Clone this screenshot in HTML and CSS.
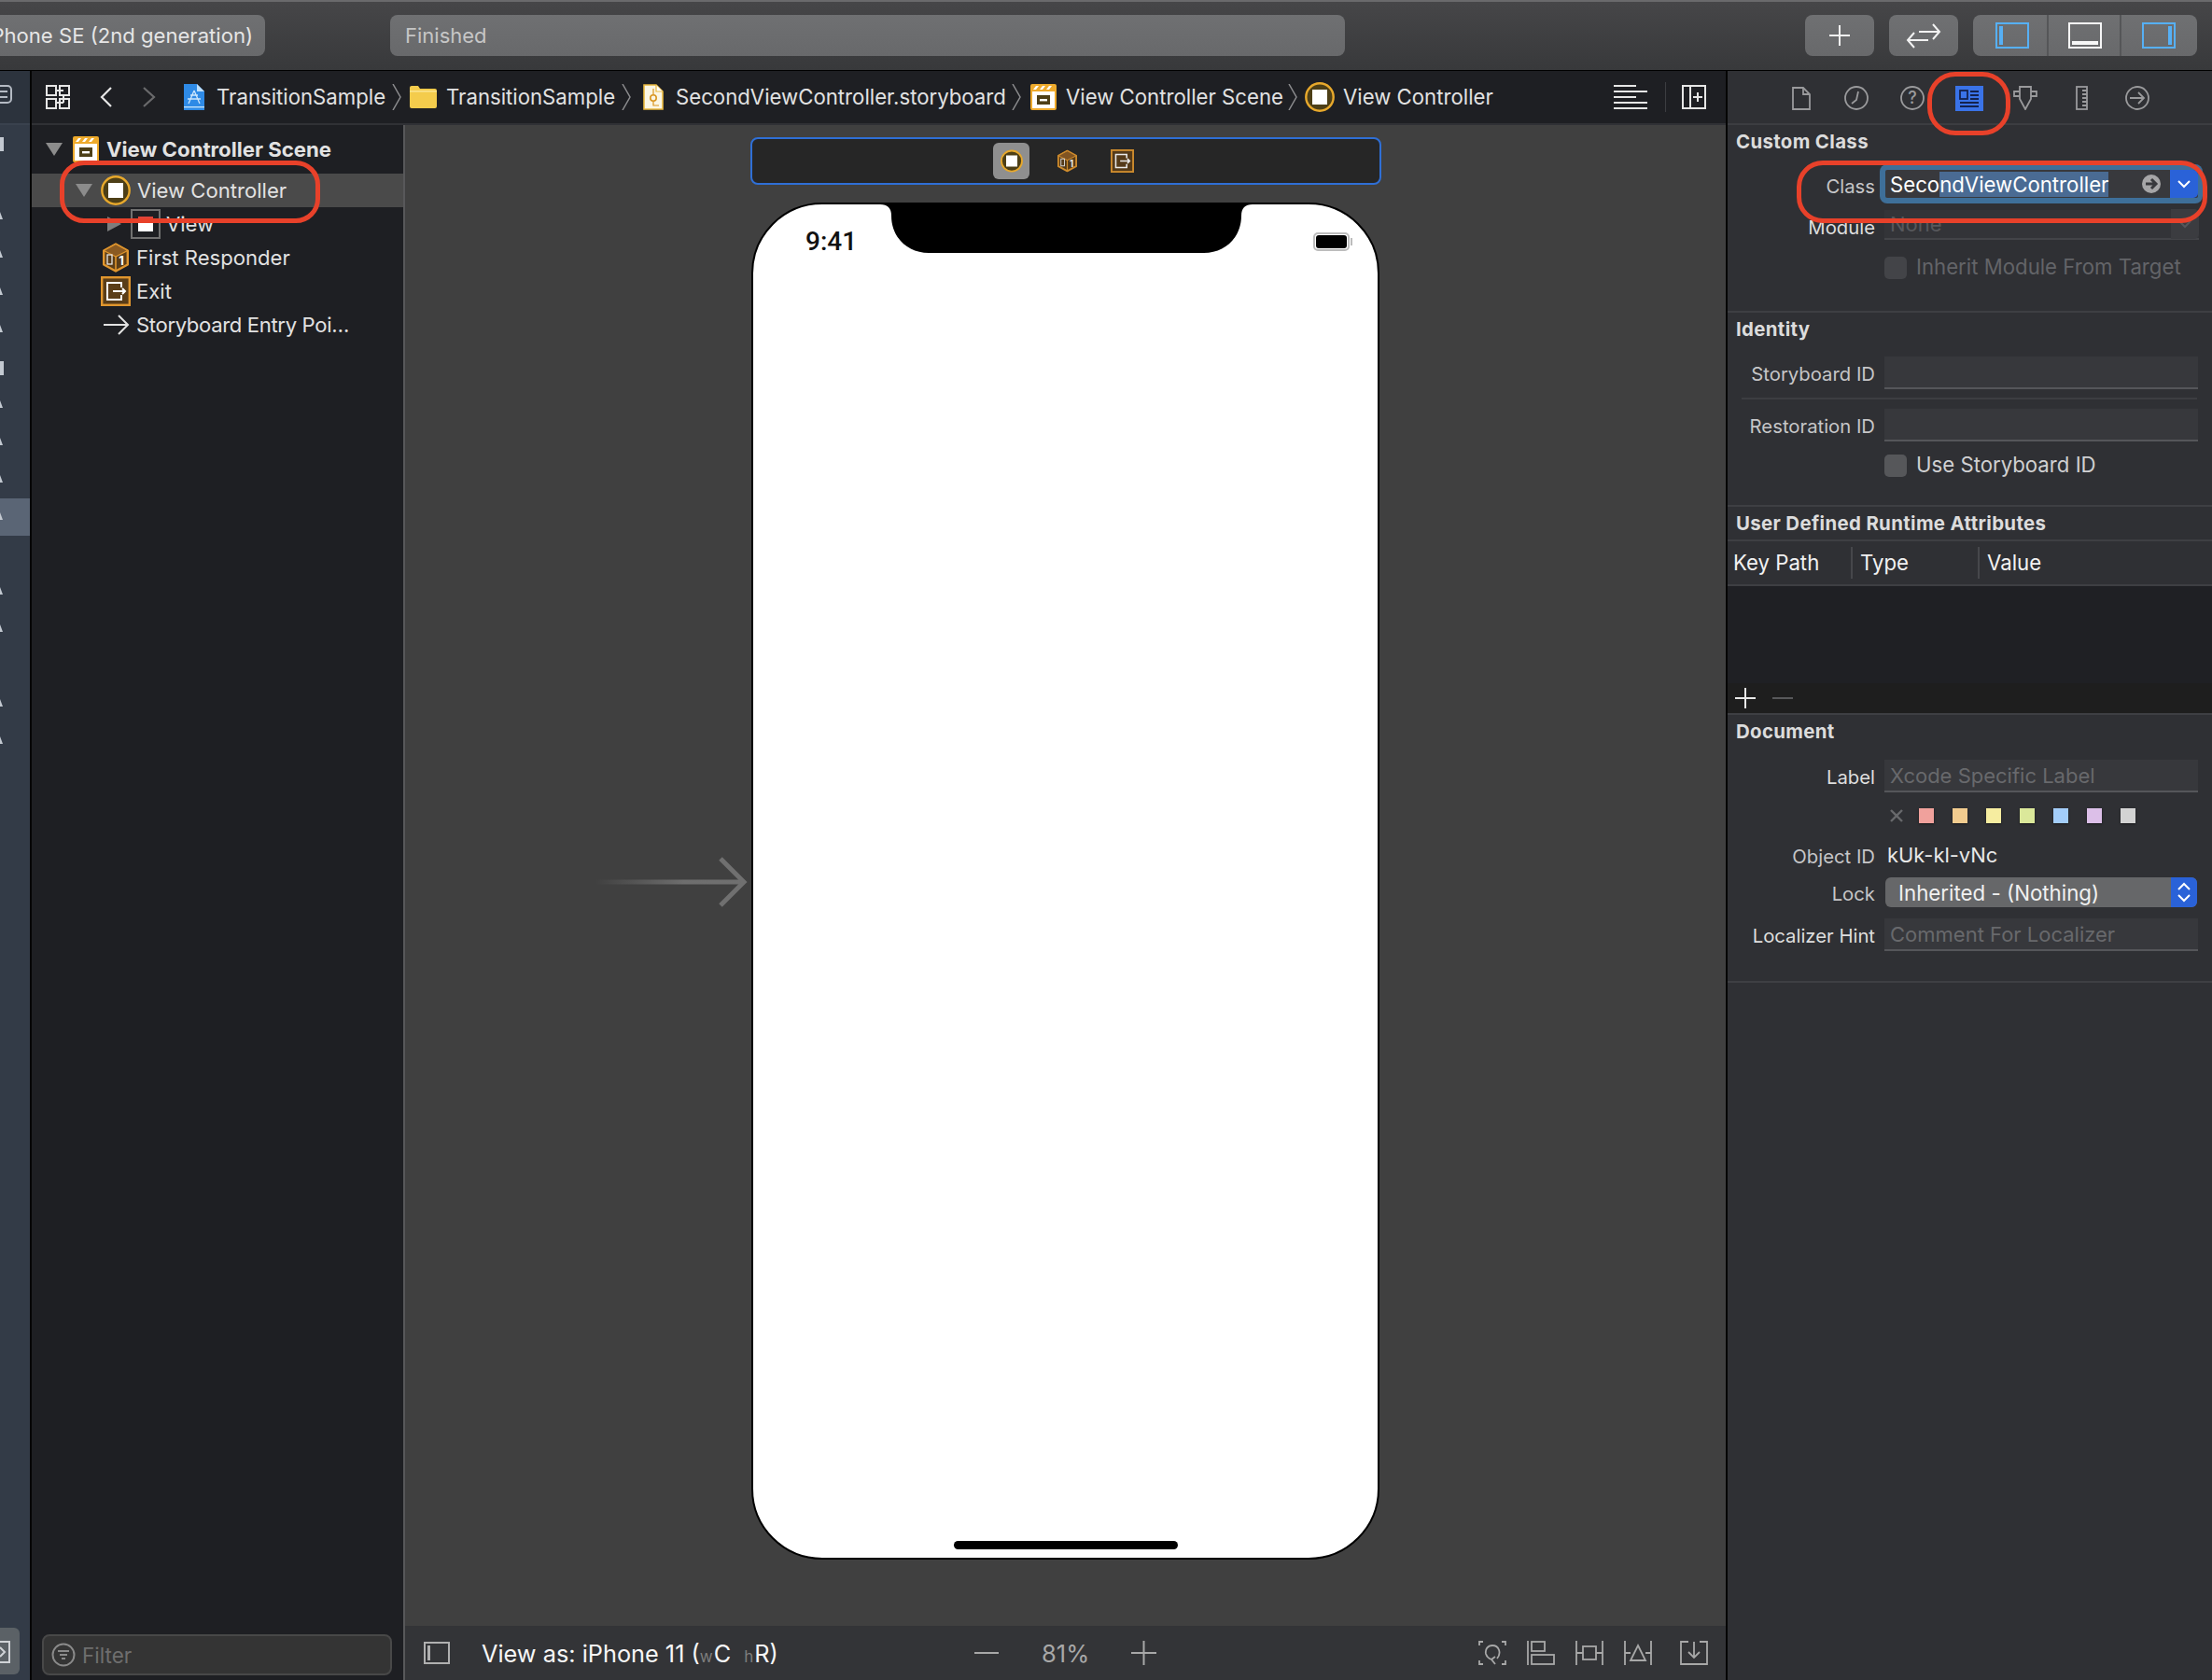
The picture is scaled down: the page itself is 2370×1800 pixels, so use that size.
FILE: index.html
```html
<!DOCTYPE html>
<html lang="en">
<head>
<meta charset="utf-8">
<title>Xcode</title>
<link rel="stylesheet" href="styles.css">
</head>
<body>
<svg class="sprite" aria-hidden="true">
  <symbol id="i-scene" viewBox="0 0 28 28">
    <rect x="0" y="0" width="28" height="28" rx="2" fill="#eeaa2c"/>
    <path d="M3 6l3-4h3l-3 4zM10 6l3-4h3l-3 4zM17 6l3-4h3l-3 4z" fill="#fff"/>
    <rect x="2" y="8" width="24" height="18" fill="#fff"/>
    <rect x="7" y="12" width="14" height="10" fill="#4d3f17"/>
    <rect x="10" y="16" width="8" height="2.4" fill="#fff"/>
  </symbol>
  <symbol id="i-vc" viewBox="0 0 32 32">
    <circle cx="16" cy="16" r="14.7" fill="#4d3f17" stroke="#e8a92c" stroke-width="2.4"/>
    <rect x="8" y="8" width="16" height="16" fill="#fff"/>
  </symbol>
  <symbol id="i-cube" viewBox="0 0 28 32">
    <path d="M14 1.5L26.8 8.5V23.5L14 30.5L1.2 23.5V8.5Z" fill="#5a3d18" stroke="#e0962e" stroke-width="2.4" stroke-linejoin="round"/>
    <path d="M14 1.5L26.8 8.5L14 15L1.2 8.5Z" fill="#8a5a22" stroke="#e0962e" stroke-width="1.4" stroke-linejoin="round"/>
    <path d="M14 15V30.5" stroke="#e0962e" stroke-width="1.6"/>
    <rect x="5" y="13" width="5" height="10" fill="none" stroke="#e8e8e8" stroke-width="1.3"/>
    <text x="20" y="24" class="cube-num" text-anchor="middle">1</text>
  </symbol>
  <symbol id="i-exit" viewBox="0 0 32 32">
    <rect x="1.2" y="1.2" width="29.6" height="29.6" fill="#5a3d18" stroke="#e0962e" stroke-width="2.4"/>
    <path d="M22 12V7H7V25H22V20" fill="none" stroke="#fff" stroke-width="2"/>
    <path d="M13 16H26M23 13l3 3-3 3" fill="none" stroke="#fff" stroke-width="2"/>
  </symbol>
  <symbol id="i-chev" viewBox="0 0 10 28">
    <path d="M1 0L9 14L1 28" fill="none" stroke="#8c8c8e" stroke-width="1.5"/>
  </symbol>
</svg>

<header class="toolbar">
  <div class="tb-btn scheme">iPhone SE (2nd generation)</div>
  <div class="tb-btn status">Finished</div>
  <div class="tb-btn tb-icon">
    <svg width="24" height="24" viewBox="0 0 24 24"><path d="M12 1V23M1 12H23" stroke="#f2f2f2" stroke-width="2"/></svg>
  </div>
  <div class="tb-btn tb-icon swap">
    <svg width="38" height="28" viewBox="0 0 38 28"><path d="M14 10H36M29 2l7 8-7 8M2 19H24M9 11l-7 8 7 8" fill="none" stroke="#f2f2f2" stroke-width="2"/></svg>
  </div>
  <div class="tb-group">
    <div class="tb-seg seg-a">
      <svg width="36" height="28" viewBox="0 0 36 28"><rect x="1" y="1" width="34" height="26" fill="none" stroke="#56b0f5" stroke-width="2"/><rect x="4" y="4" width="4" height="20" fill="#56b0f5"/></svg>
    </div>
    <div class="tb-seg seg-b">
      <svg width="36" height="28" viewBox="0 0 36 28"><rect x="1" y="1" width="34" height="26" fill="none" stroke="#f6f6f6" stroke-width="2"/><rect x="4" y="20" width="28" height="4" fill="#f6f6f6"/></svg>
    </div>
    <div class="tb-seg seg-c">
      <svg width="36" height="28" viewBox="0 0 36 28"><rect x="1" y="1" width="34" height="26" fill="none" stroke="#56b0f5" stroke-width="2"/><rect x="28" y="4" width="4" height="20" fill="#56b0f5"/></svg>
    </div>
  </div>
</header>

<div class="workspace">
  <aside class="navstrip">
    <div class="nav-top">
      <svg width="14" height="20" viewBox="0 0 14 20"><path d="M-8 1H8a4 4 0 0 1 4 4V15a4 4 0 0 1-4 4H-8" fill="none" stroke="#b4bac3" stroke-width="2"/><path d="M0 7H8M0 13H8" stroke="#b4bac3" stroke-width="2"/></svg>
    </div>
    <div class="nav-files">
      <div class="nav-selected"></div>
      <svg class="nav-marks" width="32" height="700" viewBox="0 0 32 700">
        <g fill="#c3c9d1">
          <rect x="0" y="13" width="4" height="15"/>
          <path d="M0 93l3 8H0zM0 134l3 8H0zM0 174l3 8H0zM0 214l3 8H0z"/>
          <rect x="0" y="253" width="4" height="15"/>
          <path d="M0 295l3 8H0zM0 335l3 8H0zM0 375l3 8H0zM0 415l3 8H0zM0 495l3 8H0zM0 535l3 8H0zM0 615l3 8H0zM0 655l3 8H0z"/>
        </g>
      </svg>
    </div>
    <div class="nav-bottom">
      <svg width="20" height="28" viewBox="0 0 20 28"><rect x="-10" y="4" width="20" height="22" fill="none" stroke="#cfd2d6" stroke-width="2"/><path d="M0 10l5 5-5 5" fill="none" stroke="#cfd2d6" stroke-width="2"/></svg>
    </div>
  </aside>

  <main class="editor">
    <nav class="pathbar">
      <svg class="p-grid" width="26" height="26" viewBox="0 0 26 26" fill="none" stroke="#e6e6e6" stroke-width="2"><rect x="1" y="1" width="10" height="10"/><rect x="15" y="1" width="10" height="10"/><rect x="1" y="15" width="10" height="10"/><rect x="15" y="15" width="10" height="10"/><path d="M11 6h8M19 11v8M19 19h-8"/></svg>
      <svg class="p-back" width="13" height="22" viewBox="0 0 13 22"><path d="M12 1L2 11L12 21" fill="none" stroke="#e6e6e6" stroke-width="2.2"/></svg>
      <svg class="p-fwd" width="14" height="22" viewBox="0 0 14 22"><path d="M1 1L12 11L1 21" fill="none" stroke="#6a6a6c" stroke-width="2.2"/></svg>
      <svg class="p-proj" width="22" height="28" viewBox="0 0 22 28"><path d="M0 0H14L22 8V28H0Z" fill="#2e8ae6"/><path d="M14 0L22 8H14Z" fill="#bfe0fb"/><rect x="0" y="24" width="22" height="1.4" fill="#bfe0fb"/><path d="M11 7L5 21M11 7L17 21M4 16H18M7 12H15" stroke="#cde6fc" stroke-width="1.3" fill="none"/></svg>
      <span class="crumb c1">TransitionSample</span>
      <svg class="chev ch1" width="10" height="28"><use href="#i-chev"/></svg>
      <svg class="p-folder" width="29" height="24" viewBox="0 0 29 24"><path d="M0 2a2 2 0 0 1 2-2H9l2 3H27a2 2 0 0 1 2 2V22a2 2 0 0 1-2 2H2a2 2 0 0 1-2-2Z" fill="#f4cc4c"/><rect x="0" y="5" width="29" height="1.6" fill="#fbe48f"/></svg>
      <span class="crumb c2">TransitionSample</span>
      <svg class="chev ch2" width="10" height="28"><use href="#i-chev"/></svg>
      <svg class="p-story" width="22" height="28" viewBox="0 0 22 28"><path d="M1 1H14L21 8V27H1Z" fill="#fbf6e4" stroke="#e9b83e" stroke-width="1.6"/><path d="M14 1V8H21" fill="#fff" stroke="#e9b83e" stroke-width="1.2"/><circle cx="11" cy="15" r="3.2" fill="none" stroke="#d9941f" stroke-width="1.6"/><path d="M11 5V11M11 19V23H17" fill="none" stroke="#d9941f" stroke-width="1.2"/></svg>
      <span class="crumb c3">SecondViewController.storyboard</span>
      <svg class="chev ch3" width="10" height="28"><use href="#i-chev"/></svg>
      <svg class="p-scene" width="28" height="28"><use href="#i-scene"/></svg>
      <span class="crumb c4">View Controller Scene</span>
      <svg class="chev ch4" width="10" height="28"><use href="#i-chev"/></svg>
      <svg class="p-vc" width="32" height="32"><use href="#i-vc"/></svg>
      <span class="crumb c5">View Controller</span>
      <svg class="p-lines" width="36" height="26" viewBox="0 0 36 26"><path d="M0 1H24M0 7H36M0 13H24M0 19H36M0 25H36" stroke="#e6e6e6" stroke-width="2"/></svg>
      <span class="p-divider"></span>
      <svg class="p-add" width="26" height="26" viewBox="0 0 26 26" fill="none" stroke="#e6e6e6" stroke-width="2"><rect x="1" y="1" width="24" height="24"/><path d="M9 1V25M12 13H22M17 8V18"/></svg>
    </nav>

    <div class="editor-body">
      <section class="outline">
        <div class="tree">
          <div class="row scene-row">
            <span class="tri tri-down"></span>
            <svg class="ic-scene" width="28" height="28"><use href="#i-scene"/></svg>
            <span class="row-text bold">View Controller Scene</span>
          </div>
          <div class="row vc-row selected">
            <span class="tri tri-down"></span>
            <svg class="ic-vc" width="32" height="32"><use href="#i-vc"/></svg>
            <span class="row-text">View Controller</span>
          </div>
          <div class="row view-row">
            <span class="tri tri-right"></span>
            <span class="view-icon"><span class="view-inner"></span></span>
            <span class="row-text">View</span>
          </div>
          <div class="row leaf">
            <svg class="leaf-ic cube" width="28" height="32"><use href="#i-cube"/></svg>
            <span class="row-text">First Responder</span>
          </div>
          <div class="row leaf">
            <svg class="leaf-ic" width="32" height="32"><use href="#i-exit"/></svg>
            <span class="row-text">Exit</span>
          </div>
          <div class="row leaf">
            <svg class="leaf-ic" width="32" height="24" viewBox="0 0 32 24"><path d="M3 12H29M19 2l10 10-10 10" fill="none" stroke="#e2e2e2" stroke-width="2"/></svg>
            <span class="row-text entry-text">Storyboard Entry Poi…</span>
          </div>
        </div>
        <div class="filter">
          <svg width="26" height="26" viewBox="0 0 26 26" fill="none" stroke="#8a8a8a" stroke-width="2"><circle cx="13" cy="13" r="11.5"/><path d="M7 9H19M9 13H17M11 17H15"/></svg>
          <span>Filter</span>
        </div>
      </section>

      <section class="canvas-col">
        <div class="canvas">
          <div class="dock">
            <span class="dock-tile"><svg width="24" height="25"><use href="#i-vc"/></svg></span>
            <svg class="dock-cube" width="21" height="25"><use href="#i-cube"/></svg>
            <svg class="dock-exit" width="25" height="25"><use href="#i-exit"/></svg>
          </div>
          <div class="phone">
            <svg class="notch" width="399" height="56" viewBox="0 0 399 56"><path d="M0 0H399V2C391 2 387 6 387 14C387 38 369 54 347 54H52C30 54 12 38 12 14C12 6 8 2 0 2Z" fill="#000"/></svg>
            <div class="statusbar">
              <span class="clock">9:41</span>
              <span class="battery"><span class="battery-fill"></span></span>
            </div>
            <div class="home"></div>
          </div>
          <svg class="entry" width="170" height="60" viewBox="0 0 170 60">
            <defs><linearGradient id="fade" x1="0" x2="1" y1="0" y2="0"><stop offset="0" stop-color="#6e6e6e" stop-opacity="0"/><stop offset=".6" stop-color="#6e6e6e"/><stop offset="1" stop-color="#707070"/></linearGradient></defs>
            <rect x="6" y="27.5" width="158" height="5" fill="url(#fade)"/>
            <path d="M140 5L165 30L140 55" fill="none" stroke="#707070" stroke-width="5"/>
          </svg>
        </div>
        <div class="canvas-bar">
          <svg class="cb-panel" width="28" height="24" viewBox="0 0 28 24"><rect x="1" y="1" width="26" height="22" fill="none" stroke="#b0b0b0" stroke-width="2"/><rect x="4" y="4" width="3" height="16" fill="#b0b0b0"/></svg>
          <span class="view-as">View as: iPhone 11 (<small class="sz-w">w</small>C<small class="sz-h">h</small>R)</span>
          <svg class="cb-minus" width="26" height="2" viewBox="0 0 26 2"><rect width="26" height="2" fill="#a8a8a8"/></svg>
          <span class="zoom-val">81%</span>
          <svg class="cb-plus" width="27" height="26" viewBox="0 0 27 26"><path d="M13.5 0V26M0 13H27" stroke="#a8a8a8" stroke-width="2"/></svg>
          <svg class="cb-refresh" width="30" height="26" viewBox="0 0 30 26" fill="none" stroke="#a8a8a8" stroke-width="1.8"><path d="M5 1H1V5M25 1H29V5M5 25H1V21M25 25H29V21"/><path d="M20 19C25 13 22 5 15 5C10 5 7 9 8 14C9 17 11 19 14 20M18 17L14 20L18 25"/></svg>
          <svg class="cb-align" width="30" height="26" viewBox="0 0 30 26" fill="none" stroke="#a8a8a8" stroke-width="1.8"><path d="M1 0V26"/><rect x="5" y="1" width="14" height="10"/><rect x="5" y="15" width="24" height="10"/></svg>
          <svg class="cb-pin" width="30" height="26" viewBox="0 0 30 26" fill="none" stroke="#a8a8a8" stroke-width="1.8"><path d="M1 0V26M29 0V26M1 13H8M22 13H29"/><rect x="8" y="6" width="14" height="14"/></svg>
          <svg class="cb-pin2" width="30" height="26" viewBox="0 0 30 26" fill="none" stroke="#a8a8a8" stroke-width="1.8"><path d="M1 0V26M29 0V26M1 13H7M23 13H29"/><path d="M15 5L23 21H7Z"/></svg>
          <svg class="cb-embed" width="30" height="26" viewBox="0 0 30 26" fill="none" stroke="#a8a8a8" stroke-width="1.8"><path d="M9 1H1V25H29V1H21"/><path d="M15 1V18M9 12L15 18L21 12"/></svg>
        </div>
      </section>
    </div>
  </main>

  <aside class="inspector">
    <div class="insp-tabs">
      <svg class="t-doc" width="20" height="25" viewBox="0 0 20 25" fill="none" stroke="#9a9a9c" stroke-width="1.8"><path d="M1 1H12L19 8V24H1Z"/><path d="M12 1V8H19"/></svg>
      <svg class="t-clock" width="26" height="26" viewBox="0 0 26 26" fill="none" stroke="#9a9a9c" stroke-width="1.8"><circle cx="13" cy="13" r="12"/><path d="M15 6L13 15L8 19"/></svg>
      <svg class="t-help" width="26" height="26" viewBox="0 0 26 26"><circle cx="13" cy="13" r="12" fill="none" stroke="#9a9a9c" stroke-width="1.8"/><text x="13" y="19" class="help-q" text-anchor="middle">?</text></svg>
      <svg class="t-id" width="30" height="27" viewBox="0 0 30 27"><rect width="30" height="27" fill="#3a73e8"/><g fill="none" stroke="#14224d" stroke-width="1.8"><rect x="5" y="5" width="8" height="9"/><path d="M16 6H25M16 10H25M16 14H25M5 18H25M5 22H25"/></g></svg>
      <svg class="t-shield" width="26" height="26" viewBox="0 0 26 26" fill="none" stroke="#9a9a9c" stroke-width="1.8"><path d="M7 1H19V14L13 25L7 14Z"/><path d="M7 6H1V11H7M19 6H25V11H19"/></svg>
      <svg class="t-ruler" width="13" height="26" viewBox="0 0 13 26" fill="none" stroke="#9a9a9c" stroke-width="1.8"><rect x="1" y="1" width="11" height="24"/><path d="M7 5H12M7 9H12M7 13H12M7 17H12M7 21H12"/></svg>
      <svg class="t-arrow" width="26" height="26" viewBox="0 0 26 26" fill="none" stroke="#9a9a9c" stroke-width="1.8"><circle cx="13" cy="13" r="12"/><path d="M5 13H20M14 7L20 13L14 19"/></svg>
    </div>

    <section class="sec sec-class">
      <h3 class="sec-head">Custom Class</h3>
      <div class="frow class-row">
        <label class="flabel">Class</label>
        <div class="focus-ring">
          <div class="class-field">
            <span class="class-text"><span class="sel-off">Seco</span><span class="sel-on">ndViewController</span></span>
            <svg class="go" width="20" height="20" viewBox="0 0 20 20"><circle cx="10" cy="10" r="10" fill="#a6a6a8"/><path d="M4 10H13M10 5L15 10L10 15" fill="none" stroke="#38393d" stroke-width="3"/></svg>
            <span class="class-drop"><svg width="14" height="9" viewBox="0 0 14 9"><path d="M1 1L7 7L13 1" fill="none" stroke="#fff" stroke-width="2"/></svg></span>
          </div>
        </div>
      </div>
      <div class="frow module-row">
        <label class="flabel strong">Module</label>
        <div class="module-field">
          <span class="module-text">None</span>
          <span class="module-drop"><svg width="14" height="9" viewBox="0 0 14 9"><path d="M1 1L7 7L13 1" fill="none" stroke="#55565a" stroke-width="2"/></svg></span>
        </div>
      </div>
      <div class="frow check-row disabled">
        <span class="flabel"></span>
        <div class="check"><span class="box box-dim"></span><span>Inherit Module From Target</span></div>
      </div>
    </section>

    <section class="sec sec-id">
      <h3 class="sec-head">Identity</h3>
      <div class="frow first-row">
        <label class="flabel">Storyboard ID</label>
        <div class="tfield"></div>
      </div>
      <div class="fsep"></div>
      <div class="frow second-row">
        <label class="flabel">Restoration ID</label>
        <div class="tfield"></div>
      </div>
      <div class="frow use-row">
        <span class="flabel"></span>
        <div class="check lit"><span class="box"></span><span>Use Storyboard ID</span></div>
      </div>
    </section>

    <section class="sec sec-udra">
      <h3 class="sec-head udra-head">User Defined Runtime Attributes</h3>
      <div class="table-head">
        <span class="th th-key">Key Path</span>
        <span class="th th-type">Type</span>
        <span class="th th-value">Value</span>
      </div>
      <div class="table-body"></div>
      <div class="table-foot">
        <svg width="22" height="22" viewBox="0 0 22 22"><path d="M11 0V22M0 11H22" stroke="#e8e8e8" stroke-width="2"/></svg>
        <svg class="foot-minus" width="22" height="2" viewBox="0 0 22 2"><rect width="22" height="2" fill="#57585a"/></svg>
      </div>
    </section>

    <section class="sec sec-doc">
      <h3 class="sec-head">Document</h3>
      <div class="frow doc-label">
        <label class="flabel strong">Label</label>
        <div class="tfield ph">Xcode Specific Label</div>
      </div>
      <div class="frow swatch-row">
        <span class="flabel"></span>
        <div class="swatches">
          <svg class="sw-x" width="16" height="16" viewBox="0 0 16 16"><path d="M2 2L14 14M14 2L2 14" stroke="#68696c" stroke-width="2.4"/></svg>
          <span class="sw s1"></span><span class="sw s2"></span><span class="sw s3"></span><span class="sw s4"></span><span class="sw s5"></span><span class="sw s6"></span><span class="sw s7"></span>
        </div>
      </div>
      <div class="frow oid-row">
        <label class="flabel">Object ID</label>
        <span class="oid">kUk-kl-vNc</span>
      </div>
      <div class="frow lock-row">
        <label class="flabel">Lock</label>
        <div class="lock-select">
          <span class="lock-text">Inherited - (Nothing)</span>
          <span class="lock-step"><svg width="14" height="22" viewBox="0 0 14 22"><path d="M1 8L7 2L13 8M1 14L7 20L13 14" fill="none" stroke="#fff" stroke-width="2"/></svg></span>
        </div>
      </div>
      <div class="frow hint-row">
        <label class="flabel strong">Localizer Hint</label>
        <div class="tfield ph">Comment For Localizer</div>
      </div>
    </section>
  </aside>
</div>

<div class="mark mark-vc"></div>
<div class="mark mark-tab"></div>
<div class="mark mark-class"></div>
</body>
</html>
```
FILE: styles.css
```css
* { box-sizing: border-box; }
html, body { margin: 0; padding: 0; }
body {
  width: 2370px; height: 1800px; overflow: hidden; position: relative;
  display: flex; flex-direction: column;
  background: #2f3034; color: #e6e6e6;
  font-family: Inter, "Liberation Sans", sans-serif; font-size: 22px;
}
svg { display: block; flex: none; }
.sprite { position: absolute; width: 0; height: 0; }
.cube-num { font: 700 13px Inter, sans-serif; fill: #fff; }
.help-q { font: 500 18px Inter, sans-serif; fill: #9a9a9c; }

/* toolbar */
.toolbar {
  height: 76px; flex: none; display: flex; align-items: flex-start;
  padding-top: 16px;
  background: linear-gradient(#464648, #38393b);
  border-top: 2px solid #6a6a6c; border-bottom: 1px solid #000;
}
.toolbar > * { margin-top: -2px; }
.tb-btn {
  height: 44px; background: linear-gradient(#6f7072, #68696b);
  border-radius: 8px; display: flex; align-items: center; flex: none;
}
.scheme { width: 284px; margin-left: 0; border-radius: 0 8px 8px 0; justify-content: flex-end; padding-right: 13px; color: #e6e6e6; font-size: 22.1px; white-space: nowrap; overflow: hidden; }
.status { width: 1023px; margin-left: 134px; padding-left: 16px; color: #c6c6c6; font-size: 22px; }
.tb-icon { width: 74px; justify-content: center; margin-left: 493px; }
.swap { margin-left: 16px; }
.tb-group { display: flex; width: 240px; height: 44px; margin-left: 16px; border-radius: 8px; background: linear-gradient(#6f7072, #68696b); overflow: hidden; flex: none; }
.tb-seg { height: 44px; display: flex; align-items: center; justify-content: center; }
.seg-a { width: 81px; border-right: 2px solid #555658; padding-left: 4px; }
.seg-b { width: 78px; border-right: 2px solid #555658; padding-left: 1px; }
.seg-c { width: 81px; padding-right: 2px; }

.workspace { flex: 1; display: flex; min-height: 0; }

/* navigator strip */
.navstrip { width: 34px; flex: none; display: flex; flex-direction: column; background: #333b47; border-right: 2px solid #050505; }
.nav-top { height: 58px; flex: none; padding-top: 15px; background: #2c333d; border-bottom: 2px solid #3a424e; }
.nav-files { flex: 1; position: relative; }
.nav-selected { position: absolute; left: 0; right: 0; top: 400px; height: 40px; background: #5a6575; }
.nav-marks { position: absolute; left: 0; top: 0; }
.nav-bottom { height: 50px; flex: none; margin: 0 11px 6px 0; background: #5b6166; border-radius: 0 6px 6px 0; display: flex; align-items: center; }

/* editor */
.editor { width: 1817px; flex: none; display: flex; flex-direction: column; border-right: 2px solid #050505; }
.pathbar { height: 58px; flex: none; background: #1e1f23; border-bottom: 2px solid #303135; display: flex; align-items: center; padding-right: 21px; }
.crumb { font-size: 22.2px; color: #e2e2e2; white-space: nowrap; flex: none; padding-bottom: 1px; }
.p-grid { margin-left: 15px; }
.p-back { margin-left: 32px; }
.p-fwd { margin-left: 33px; }
.p-proj { margin-left: 30px; }
.c1 { margin-left: 13px; width: 180px; }
.ch1 { margin-left: 8px; }
.p-folder { margin-left: 9px; }
.c2 { margin-left: 10px; width: 180px; }
.ch2 { margin-left: 8px; }
.p-story { margin-left: 13px; }
.c3 { margin-left: 13px; width: 351px; }
.ch3 { margin-left: 9px; }
.p-scene { margin-left: 10px; }
.c4 { margin-left: 10px; width: 231px; }
.ch4 { margin-left: 7px; }
.p-vc { margin-left: 8px; }
.c5 { margin-left: 9px; width: 158px; }
.p-lines { margin-left: auto; }
.p-divider { width: 1px; height: 32px; background: #3c3d41; margin-left: 19px; }
.p-add { margin-left: 17px; }

.editor-body { flex: 1; display: flex; min-height: 0; }

/* outline */
.outline { width: 400px; flex: none; background: #1e1f23; border-right: 2px solid #58585a; display: flex; flex-direction: column; padding-top: 8px; }
.tree { flex: 1; }
.row { height: 36px; display: flex; align-items: center; white-space: nowrap; }
.row-text { color: #e2e2e2; font-size: 22.1px; padding-bottom: 1px; }
.row-text.bold { font-weight: 700; font-size: 22.2px; padding-bottom: 2px; }
.row-text.entry-text { letter-spacing: -.35px; }
.scene-row { margin-bottom: 8px; padding-left: 15px; }
.selected { background: #4a4a4a; }
.tri { width: 0; height: 0; flex: none; }
.tri-down { border-left: 9px solid transparent; border-right: 9px solid transparent; border-top: 14px solid #8c8c8c; }
.tri-right { border-top: 8px solid transparent; border-bottom: 8px solid transparent; border-left: 15px solid #7d7d7d; }
.ic-scene { margin-left: 11px; }
.scene-row .row-text { margin-left: 8px; }
.vc-row { padding-left: 47px; }
.ic-vc { margin-left: 9px; }
.vc-row .row-text { margin-left: 7px; }
.view-row { padding-left: 81px; }
.view-icon { width: 32px; height: 32px; margin-left: 10px; flex: none; border: 2px solid #717171; display: flex; justify-content: center; padding-top: 6px; }
.view-inner { display: block; width: 16px; height: 16px; background: #fff; border-top: 3px solid #e0453a; }
.view-row .row-text { margin-left: 6px; }
.leaf { padding-left: 74px; }
.leaf-ic { width: 32px; }
.leaf .row-text { margin-left: 6px; }
.filter {
  height: 44px; margin: 0 12px 5px 11px; flex: none; display: flex; align-items: center;
  background: #343434; border: 2px solid #484848; border-radius: 8px; padding-left: 8px;
  color: #6e6e6e; font-size: 22.5px; gap: 7px;
}

/* canvas */
.canvas-col { flex: 1; display: flex; flex-direction: column; min-width: 0; }
.canvas { flex: 1; position: relative; background: #404040; display: flex; flex-direction: column; align-items: flex-start; padding: 13px 0 0 370px; }
.dock { width: 676px; height: 51px; flex: none; background: #262626; border: 2px solid #2f6fd6; border-radius: 8px; display: flex; align-items: center; padding-left: 258px; }
.dock-tile { width: 39px; height: 39px; background: #8f8f8f; border-radius: 6px; display: flex; align-items: center; justify-content: center; }
.dock-cube { margin-left: 30px; opacity: .9; }
.dock-exit { margin-left: 36px; opacity: .9; }
.phone { width: 673px; height: 1454px; flex: none; margin: 19px 0 0 1px; background: #fff; border: 2px solid #000; border-radius: 76px; position: relative; }
.notch { position: absolute; top: -2px; left: 136px; }
.statusbar { height: 80px; display: flex; align-items: center; justify-content: space-between; padding: 0 30px 0 56px; }
.clock { font-family: Roboto, sans-serif; font-weight: 500; font-size: 28px; color: #111; line-height: 30px; }
.battery { width: 39px; height: 20px; border: 2px solid #bcbcbc; border-radius: 5px; padding: 1px; position: relative; }
.battery-fill { display: block; height: 100%; background: #000; border-radius: 3px; }
.battery::after { content: ""; position: absolute; right: -5px; top: 4px; width: 2px; height: 8px; background: #bcbcbc; }
.home { position: absolute; left: 215px; bottom: 9px; width: 240px; height: 9px; background: #000; border-radius: 5px; }
.entry { position: absolute; left: 198px; top: 781px; }

.canvas-bar { height: 58px; flex: none; background: #333437; display: flex; align-items: center; padding-right: 19px; }
.cb-panel { margin-left: 20px; }
.view-as { margin-left: 34px; width: 320px; font-size: 25.3px; color: #f6f6f6; white-space: nowrap; }
.view-as small { font-size: 17px; color: #7e7e7e; }
.sz-w { margin-right: 1px; }
.sz-h { margin: 0 1px 0 14px; }
.cb-minus { margin-left: 208px; }
.zoom-val { margin-left: 46px; width: 51px; color: #a8a8a8; font-size: 25.5px; }
.cb-plus { margin-left: 45px; }
.cb-refresh { margin-left: auto; }
.cb-align { margin-left: 22px; }
.cb-pin { margin-left: 22px; }
.cb-pin2 { margin-left: 22px; }
.cb-embed { margin-left: 30px; }

/* inspector */
.inspector { flex: 1; min-width: 0; background: #2f3034; display: flex; flex-direction: column; }
.insp-tabs { height: 58px; flex: none; border-bottom: 2px solid #3c3d41; display: flex; align-items: center; padding: 2px 0 0 69px; }
.t-clock { margin-left: 36px; }
.t-help { margin-left: 34px; }
.t-id { margin-left: 33px; }
.t-shield { margin-left: 32px; }
.t-ruler { margin-left: 41px; }
.t-arrow { margin-left: 40px; }

.sec { flex: none; border-bottom: 2px solid #3e3f43; }
.sec-class { height: 201px; }
.sec-id { height: 208px; }
.sec-udra { height: 223px; }
.sec-doc { height: 287px; }
.sec-head { margin: 0; padding: 0 0 3px 9px; height: 38px; display: flex; align-items: center; font-size: 20.4px; font-weight: 700; color: #dcdcdc; letter-spacing: .35px; }
.frow { display: grid; grid-template-columns: 158px 1fr; column-gap: 10px; align-items: center; padding-right: 15px; }
.flabel { text-align: right; color: #c6c6c8; font-size: 20.3px; white-space: nowrap; padding-top: 2px; }
.flabel.strong { color: #dedede; }
.class-row { height: 42px; margin-top: 4px; column-gap: 5px; padding-right: 10px; }
.class-row .flabel, .module-row .flabel { padding-top: 5px; }
.focus-ring { height: 42px; background: #3e6f99; border-radius: 8px; padding: 6px 5px 6px 6px; }
.class-field { height: 30px; background: #38393d; display: flex; align-items: center; position: relative; padding-left: 5px; border-radius: 2px; }
.class-text { color: #fff; font-size: 22.2px; white-space: nowrap; display: flex; align-items: center; }
.sel-on { background: #4a6b93; height: 27px; line-height: 27px; }
.go { margin-left: auto; margin-right: 10px; }
.class-drop { width: 30px; height: 30px; background: #2a62d8; border-radius: 0 5px 5px 0; display: flex; align-items: center; justify-content: center; }
.module-row { height: 32px; margin-top: 7px; padding-right: 14px; }
.module-field { height: 32px; background: #333438; border-bottom: 2px solid #434448; display: flex; align-items: center; position: relative; padding-left: 6px; }
.module-text { color: #57585c; font-size: 22px; }
.module-drop { width: 30px; height: 32px; margin-left: auto; background: #3b3c40; border-radius: 0 5px 5px 0; display: flex; align-items: center; justify-content: center; }
.check { display: flex; align-items: center; gap: 10px; font-size: 22.2px; color: #d0d0d2; white-space: nowrap; }
.check > span:last-child { padding-bottom: 2px; }
.box { width: 24px; height: 24px; background: #56575a; border-radius: 5px; flex: none; }
.box-dim { background: #434448; }
.check-row { height: 24px; margin-top: 15px; }
.disabled .check { color: #636468; }
.tfield { height: 36px; background: #37383c; border-bottom: 2px solid #55565a; border-top: 1px solid #303135; padding-left: 6px; display: flex; align-items: center; font-size: 22px; color: #68696c; }
.first-row { height: 36px; margin-top: 8px; }
.fsep { height: 2px; margin: 9px 16px 0 15px; background: #3c3d41; }
.second-row { height: 36px; margin-top: 9px; }
.use-row { height: 24px; margin-top: 11px; }
.udra-head { height: 35px; padding-bottom: 0; }
.table-head { height: 50px; border-top: 2px solid #3e3f43; border-bottom: 2px solid #3e3f43; display: grid; grid-template-columns: 132px 136px 1fr; align-items: center; }
.th { font-size: 22.2px; color: #f2f2f2; height: 34px; display: flex; align-items: center; padding-bottom: 2px; }
.th-key { padding-left: 6px; }
.th-type, .th-value { border-left: 2px solid #46474b; padding-left: 8px; }
.table-body { height: 104px; background: #1f2024; }
.table-foot { height: 32px; background: #1e1e1e; display: flex; align-items: center; padding-left: 8px; }
.foot-minus { margin-left: 18px; }
.sec-doc .sec-head { height: 38px; }
.doc-label { height: 36px; margin-top: 9px; }
.swatch-row { height: 16px; margin-top: 17px; }
.swatches { display: flex; align-items: center; margin-left: 5px; }
.sw-x { margin-right: 16px; }
.sw { width: 16px; height: 16px; margin-right: 20px; flex: none; box-shadow: 0 1px 2px rgba(0,0,0,.5); }
.s1 { background: #f0a19c; } .s2 { background: #f2cc8f; } .s3 { background: #f6eda0; } .s4 { background: #dbe89a; }
.s5 { background: #a3cdf9; } .s6 { background: #dcbfe8; } .s7 { background: #d3d3d3; }
.oid-row { height: 32px; margin-top: 19px; }
.oid-row .flabel { padding-top: 0; }
.oid { color: #e8e8e8; font-size: 21.9px; margin-left: 3px; padding-bottom: 2px; }
.lock-row { height: 32px; margin-top: 7px; }
.lock-select { height: 32px; margin: 0 1px; background: #666769; border-radius: 6px; display: flex; align-items: center; padding-left: 14px; font-size: 22.3px; color: #f0f0f0; overflow: hidden; }
.lock-step { width: 28px; height: 32px; margin-left: auto; background: #2a62d8; display: flex; align-items: center; justify-content: center; }
.hint-row { height: 36px; margin-top: 11px; }

/* red annotation marks laid over the screenshot */
.mark { position: absolute; border: 5px solid #e8412a; }
.mark-vc { left: 64px; top: 172px; width: 279px; height: 67px; border-radius: 26px; }
.mark-tab { left: 2065px; top: 77px; width: 89px; height: 68px; border-radius: 30px; }
.mark-class { left: 1925px; top: 172px; width: 440px; height: 67px; border-radius: 28px; }
```
